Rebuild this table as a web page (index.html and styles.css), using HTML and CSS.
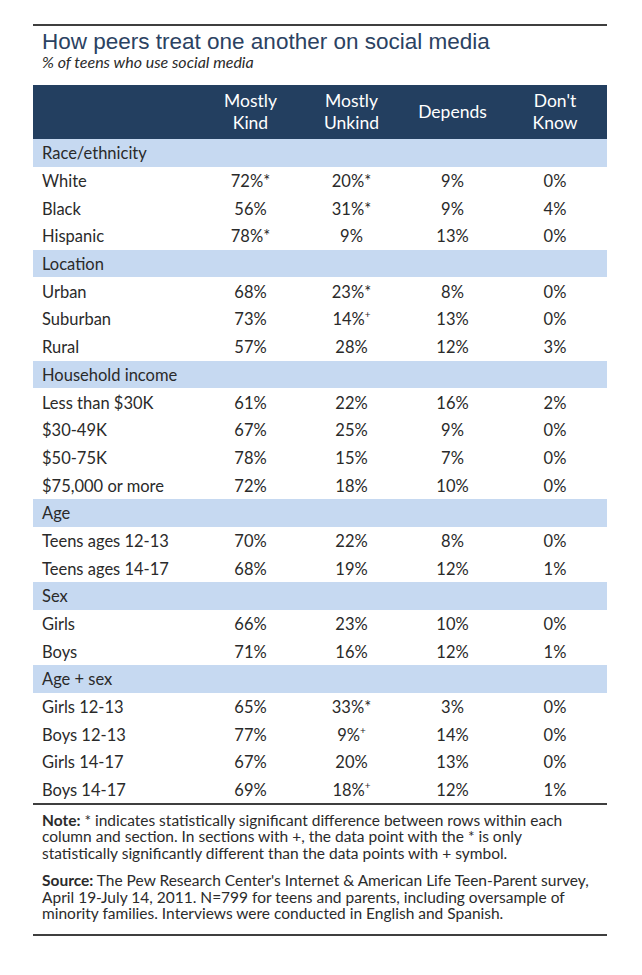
FILE: index.html
```html
<!DOCTYPE html>
<html lang="en">
<head>
<meta charset="utf-8">
<title>How peers treat one another on social media</title>
<link rel="stylesheet" href="styles.css">
</head>
<body>
<div class="figure">
  <h1 class="title">How peers treat one another on social media</h1>
  <p class="subtitle">% of teens who use social media</p>
  <table class="data">
    <thead>
      <tr>
        <th class="label"></th>
        <th>Mostly<br>Kind</th>
        <th>Mostly<br>Unkind</th>
        <th>Depends</th>
        <th>Don't<br>Know</th>
      </tr>
    </thead>
    <tbody>
      <tr class="section"><td colspan="5">Race/ethnicity</td></tr>
      <tr><td class="label">White</td><td>72%*</td><td>20%*</td><td>9%</td><td>0%</td></tr>
      <tr><td class="label">Black</td><td>56%</td><td>31%*</td><td>9%</td><td>4%</td></tr>
      <tr><td class="label">Hispanic</td><td>78%*</td><td>9%</td><td>13%</td><td>0%</td></tr>
      <tr class="section"><td colspan="5">Location</td></tr>
      <tr><td class="label">Urban</td><td>68%</td><td>23%*</td><td>8%</td><td>0%</td></tr>
      <tr><td class="label">Suburban</td><td>73%</td><td>14%<sup>+</sup></td><td>13%</td><td>0%</td></tr>
      <tr><td class="label">Rural</td><td>57%</td><td>28%</td><td>12%</td><td>3%</td></tr>
      <tr class="section"><td colspan="5">Household income</td></tr>
      <tr><td class="label">Less than $30K</td><td>61%</td><td>22%</td><td>16%</td><td>2%</td></tr>
      <tr><td class="label">$30-49K</td><td>67%</td><td>25%</td><td>9%</td><td>0%</td></tr>
      <tr><td class="label">$50-75K</td><td>78%</td><td>15%</td><td>7%</td><td>0%</td></tr>
      <tr><td class="label">$75,000 or more</td><td>72%</td><td>18%</td><td>10%</td><td>0%</td></tr>
      <tr class="section"><td colspan="5">Age</td></tr>
      <tr><td class="label">Teens ages 12-13</td><td>70%</td><td>22%</td><td>8%</td><td>0%</td></tr>
      <tr><td class="label">Teens ages 14-17</td><td>68%</td><td>19%</td><td>12%</td><td>1%</td></tr>
      <tr class="section"><td colspan="5">Sex</td></tr>
      <tr><td class="label">Girls</td><td>66%</td><td>23%</td><td>10%</td><td>0%</td></tr>
      <tr><td class="label">Boys</td><td>71%</td><td>16%</td><td>12%</td><td>1%</td></tr>
      <tr class="section"><td colspan="5">Age + sex</td></tr>
      <tr><td class="label">Girls 12-13</td><td>65%</td><td>33%*</td><td>3%</td><td>0%</td></tr>
      <tr><td class="label">Boys 12-13</td><td>77%</td><td>9%<sup>+</sup></td><td>14%</td><td>0%</td></tr>
      <tr><td class="label">Girls 14-17</td><td>67%</td><td>20%</td><td>13%</td><td>0%</td></tr>
      <tr><td class="label">Boys 14-17</td><td>69%</td><td>18%<sup>+</sup></td><td>12%</td><td>1%</td></tr>
    </tbody>
  </table>
  <div class="notes">
    <p><b>Note:</b> * indicates statistically significant difference between rows within each<br>column and section. In sections with +, the data point with the * is only<br>statistically significantly different than the data points with + symbol.</p>
    <p><b>Source:</b> The Pew Research Center's Internet &amp; American Life Teen-Parent survey,<br>April 19-July 14, 2011. N=799 for teens and parents, including oversample of<br>minority families. Interviews were conducted in English and Spanish.</p>
  </div>
</div>
</body>
</html>
```

FILE: styles.css
```css
html, body {
  margin: 0;
  padding: 0;
  background: #ffffff;
}

.figure {
  width: 574px;
  margin: 24px 0 0 33px;
  border-top: 2px solid #3f3f3f;
  font-family: Lato, "Open Sans", sans-serif;
  color: #2a2a2a;
}

.title {
  margin: 5px 0 0 9px;
  font-family: "Liberation Sans", Arial, sans-serif;
  font-weight: 400;
  font-size: 22.5px;
  line-height: 22px;
  color: #2b4262;
}

.subtitle {
  margin: 1px 0 0 9px;
  font-style: italic;
  font-size: 16px;
  line-height: 16px;
  color: #2a2a2a;
}

.data {
  width: 574px;
  margin-top: 15px;
  border-collapse: collapse;
  table-layout: fixed;
}

.data th {
  height: 54px;
  padding: 0;
  background: #233f60;
  color: #ffffff;
  font-weight: 400;
  font-size: 17.5px;
  line-height: 22px;
  text-align: center;
  vertical-align: middle;
}

.data th.label {
  width: 167px;
}

.data th:nth-child(2),
.data th:nth-child(3),
.data th:nth-child(4) {
  width: 101px;
}

.data td {
  height: 27.7px;
  padding: 1px 0 0 0;
  box-sizing: border-box;
  font-size: 16.5px;
  line-height: 20px;
  text-align: center;
  vertical-align: middle;
  white-space: nowrap;
}

.data td.label {
  text-align: left;
  padding-left: 9px;
}

.data tr.section td {
  background: #c6d9f1;
  text-align: left;
  padding-left: 9px;
}

.data tbody tr:last-child td {
  border-bottom: 2px solid #3f3f3f;
}

.data sup {
  font-size: 10px;
  line-height: 0;
  vertical-align: 7px;
}

.notes {
  padding: 7px 0 12px 9px;
  border-bottom: 2px solid #3f3f3f;
  font-size: 15.5px;
  line-height: 16.5px;
  color: #2b2b2b;
}

.notes p {
  margin: 0;
  white-space: nowrap;
}

.notes p + p {
  margin-top: 11px;
}

.notes b {
  font-weight: 700;
}
```
